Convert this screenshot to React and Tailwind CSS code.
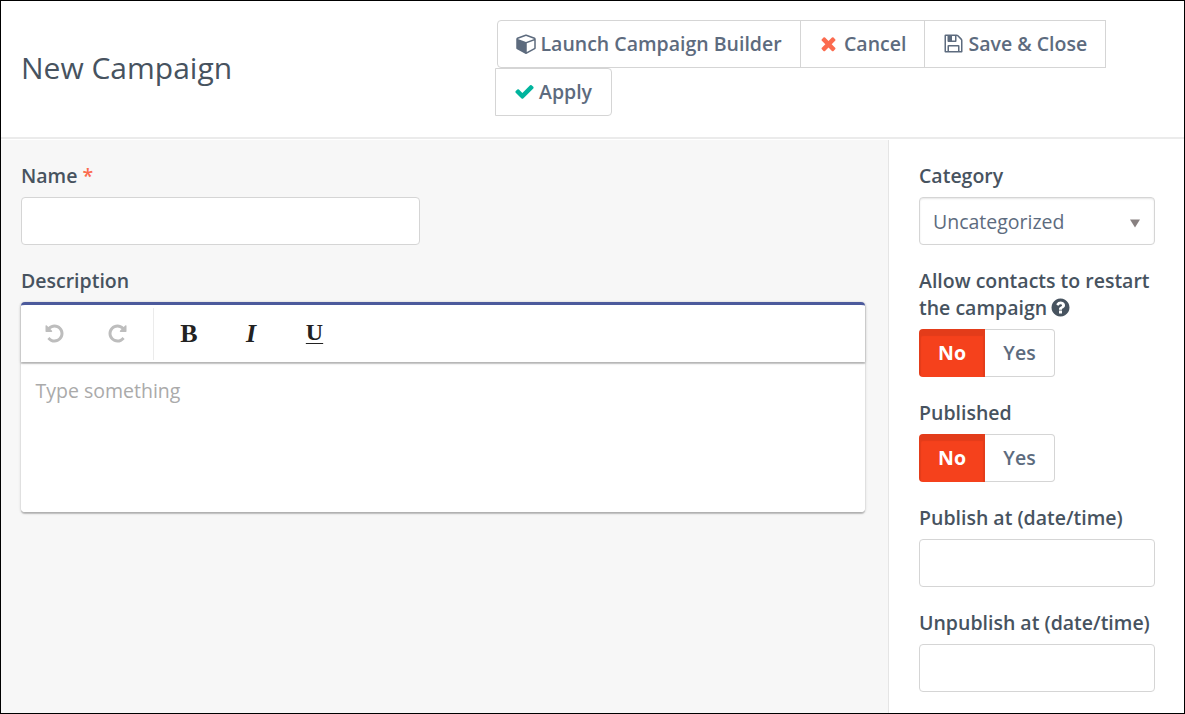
import React from "react";

const PATHS = {
  cube: "M896 1629l640-349v-636l-640 233v752zm-64-865l698-254-698-254-698 254zm832-252v768q0 35-18 65t-49 47l-704 384q-28 16-61 16t-61-16l-704-384q-31-17-49-47t-18-65v-768q0-40 23-73t61-47l704-256q22-8 44-8t44 8l704 256q38 14 61 47t23 73z",
  times: "M1490 1322q0 40-28 68l-136 136q-28 28-68 28t-68-28l-294-294-294 294q-28 28-68 28t-68-28l-136-136q-28-28-28-68t28-68l294-294-294-294q-28-28-28-68t28-68l136-136q28-28 68-28t68 28l294 294 294-294q28-28 68-28t68 28l136 136q28 28 28 68t-28 68l-294 294 294 294q28 28 28 68z",
  save: "M512 1536h768v-384h-768v384zm896 0h128v-896q0-14-10-38.5t-20-34.5l-281-281q-10-10-34-20t-39-10v416q0 40-28 68t-68 28h-576q-40 0-68-28t-28-68v-416h-128v1280h128v-416q0-40 28-68t68-28h832q40 0 68 28t28 68v416zm-384-928v-320q0-13-9.5-22.5t-22.5-9.5h-192q-13 0-22.5 9.5t-9.5 22.5v320q0 13 9.5 22.5t22.5 9.5h192q13 0 22.5-9.5t9.5-22.5zm640 32v928q0 40-28 68t-68 28h-1344q-40 0-68-28t-28-68v-1344q0-40 28-68t68-28h928q40 0 88 20t76 48l280 280q28 28 48 76t20 88z",
  check: "M1671 566q0 40-28 68l-724 724-136 136q-28 28-68 28t-68-28l-136-136-362-362q-28-28-28-68t28-68l136-136q28-28 68-28t68 28l294 295 656-657q28-28 68-28t68 28l136 136q28 28 28 68z",
  question: "M1024 1376v-192q0-14-9-23t-23-9h-192q-14 0-23 9t-9 23v192q0 14 9 23t23 9h192q14 0 23-9t9-23zm256-672q0-88-55.5-163t-138.5-116-170-41q-243 0-371 213-15 24 8 42l132 100q7 6 19 6 16 0 25-12 53-68 86-92 34-24 86-24 48 0 85.5 26t37.5 59q0 38-20 61t-68 45q-63 28-115.5 86.5t-52.5 125.5v36q0 14 9 23t23 9h192q14 0 23-9t9-23q0-19 21.5-49.5t54.5-49.5q32-18 49-28.5t46-35 44.5-48 28-60.5 12.5-81zm384 192q0 209-103 385.5t-279.5 279.5-385.5 103-385.5-103-279.5-279.5-103-385.5 103-385.5 279.5-279.5 385.5-103 385.5 103 279.5 279.5 103 385.5z",
  redo: "M1664 256v448q0 26-19 45t-45 19h-448q-42 0-59-40-17-39 14-69l138-138q-148-137-349-137-104 0-198.5 40.5t-163.5 109.5-109.5 163.5-40.5 198.5 40.5 198.5 109.5 163.5 163.5 109.5 198.5 40.5q119 0 225-52t179-147q7-10 23-12 15 0 25 9l137 138q9 8 9.5 20.5t-7.5 22.5q-109 132-264 204.5t-327 72.5q-156 0-298-61t-245-164-164-245-61-298 61-298 164-245 245-164 298-61q147 0 284.5 55.5t244.5 156.5l130-129q29-31 70-14 39 17 39 59z",
};

function Icon({ name, box = "0 0 1792 1792", className = "" }) {
  return (
    <svg viewBox={box} fill="currentColor" className={`h-[21px] shrink-0 ${className}`}>
      <path d={PATHS[name]} />
    </svg>
  );
}

function HeaderButton({ children, className }) {
  return (
    <button className={`flex h-12 items-center border border-[#d5d5d5] bg-white pb-px whitespace-nowrap ${className}`}>
      {children}
    </button>
  );
}

const Label = ({ children }) => <div className="mb-2 leading-[27px] text-[#47535f]">{children}</div>;

const Field = ({ className = "" }) => (
  <input className={`block h-12 rounded-[4px] border border-[#d5d5d5] bg-white px-3 ${className}`} />
);

function Toggle() {
  return (
    <div className="flex h-12 w-[136px]">
      <button className="w-[66px] rounded-l-[4px] bg-[#f5411c] pb-px font-bold text-white shadow-[inset_0_5px_1px_2px_rgba(0,0,0,0.07)]">
        No
      </button>
      <button className="w-[70px] rounded-r-[4px] border border-l-0 border-[#d5d5d5] bg-white pb-px text-[#5d6b7e]">
        Yes
      </button>
    </div>
  );
}

export default function App() {
  return (
    <div className="flex h-[714px] w-[1185px] flex-col overflow-hidden border border-black bg-white font-['Open_Sans',sans-serif] text-[19.5px] font-semibold text-[#5d6b7e]">
      <header className="flex h-[138px] shrink-0 border-b-2 border-[#ebebeb]">
        <h1 className="w-[493px] pt-[46px] pl-5 text-[30px] leading-[42px] font-normal text-[#47535f]">New Campaign</h1>
        <div className="flex flex-col items-start pt-[19px]">
          <div className="ml-[3px] flex">
            <HeaderButton className="w-[304px] rounded-l-[4px] pl-[17.5px]">
              <Icon name="cube" box="0 0 1664 1792" className="mr-[5px] w-[20px]" />
              Launch Campaign Builder
            </HeaderButton>
            <HeaderButton className="-ml-px w-[125px] pl-[17px]">
              <Icon name="times" className="mr-[5px] w-[21px] text-[#fb6b4f]" />
              Cancel
            </HeaderButton>
            <HeaderButton className="-ml-px w-[182px] pl-[18px]">
              <Icon name="save" className="mr-[4.5px] w-[21px]" />
              Save &amp; Close
            </HeaderButton>
          </div>
          <HeaderButton className="ml-px w-[117px] rounded-r-[4px] pl-[18px]">
            <Icon name="check" className="mr-[4px] w-[21px] text-[#00b49d]" />
            Apply
          </HeaderButton>
        </div>
      </header>

      <div className="mt-px flex min-h-0 flex-1">
        <main className="w-[887px] bg-[#f7f7f7] pt-[22px] pl-5">
          <Label>
            Name <span className="text-[#fb6b4f]">*</span>
          </Label>
          <Field className="w-[399px]" />
          <div className="mt-[22px]">
            <Label>Description</Label>
          </div>
          <div className="w-[844px] rounded-[4px] shadow-[0_1px_3px_rgba(0,0,0,0.22),0_2px_1px_rgba(0,0,0,0.16)]">
            <div className="relative flex h-[60px] items-center rounded-t-[4px] border-t-[3px] border-[#4c5a9c] bg-white shadow-[0_1px_3px_rgba(0,0,0,0.22),0_2px_1px_rgba(0,0,0,0.16)]">
              <div className="flex h-[52px] w-[133px] items-center border-r border-[#ebebeb] pl-[23px] text-[#bdbdbd]">
                <Icon name="redo" className="w-[21px] -scale-x-100" />
                <Icon name="redo" className="ml-[42px] w-[21px]" />
              </div>
              <div className="flex items-baseline font-['Liberation_Serif',serif] text-[26px] leading-[30px] text-[#222222]">
                <span className="w-[70px] text-center font-bold">B</span>
                <span className="w-[54px] text-center font-bold italic">I</span>
                <span className="w-[73px] -translate-y-[2px] text-center text-[24px] font-bold underline decoration-1 underline-offset-[3px]">U</span>
              </div>
            </div>
            <div className="h-[150px] rounded-b-[4px] bg-white px-[14.5px] pt-[15px] leading-[27px] font-normal text-[#aaaaaa]">
              Type something
            </div>
          </div>
        </main>

        <aside className="flex-1 border-l border-[#e5e5e5] pt-[22px] pl-[30px]">
          <Label>Category</Label>
          <div className="flex h-12 w-[236px] items-center justify-between rounded-[4px] border border-[#d5d5d5] bg-white pt-px pr-[13px] pl-[13px] font-normal shadow-[inset_0_1px_2px_rgba(0,0,0,0.1)]">
            Uncategorized
            <svg viewBox="0 0 12 9" className="mt-[3px] h-[9px] w-3 fill-[#888080]">
              <path d="M1 0.5h10l-5 8z" />
            </svg>
          </div>
          <div className="mt-[22px]">
            <Label>
              <div>Allow contacts to restart</div>
              <div className="flex h-[27px] items-center">
                the campaign <Icon name="question" className="ml-[3px] w-[21px]" />
              </div>
            </Label>
            <Toggle />
          </div>
          <div className="mt-[22px]">
            <Label>Published</Label>
            <Toggle />
          </div>
          <div className="mt-[22px]">
            <Label>Publish at (date/time)</Label>
            <Field className="w-[236px]" />
          </div>
          <div className="mt-[22px]">
            <Label>Unpublish at (date/time)</Label>
            <Field className="w-[236px]" />
          </div>
        </aside>
      </div>
    </div>
  );
}
